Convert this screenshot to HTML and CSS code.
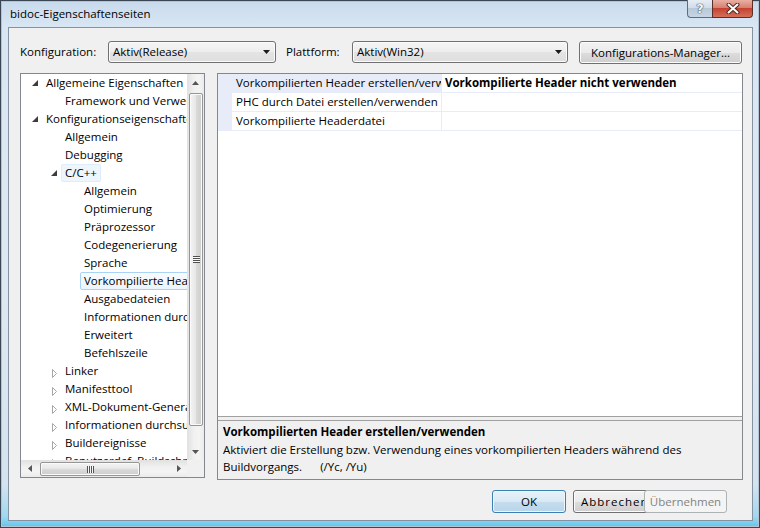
FILE: index.html
```html
<!DOCTYPE html>
<html lang="de">
<head>
<meta charset="utf-8">
<title>bidoc-Eigenschaftenseiten</title>
<link rel="stylesheet" href="styles.css">
</head>
<body>
<div class="window">
  <div class="titlebar">
    <span class="title">bidoc-Eigenschaftenseiten</span>
    <div class="caption">
      <span class="cap-btn help">?</span>
      <span class="cap-btn close"><svg width="14" height="11" viewBox="0 0 14 11"><path d="M2.5 1.5 L11.5 9.5 M11.5 1.5 L2.5 9.5" stroke="#4a2a25" stroke-width="4" stroke-linecap="round"/><path d="M2.5 1.5 L11.5 9.5 M11.5 1.5 L2.5 9.5" stroke="#ffffff" stroke-width="2" stroke-linecap="round"/></svg></span>
    </div>
  </div>
  <div class="client">
    <div class="toolbar">
      <span class="lbl lbl-konf">Konfiguration:</span>
      <div class="combo combo-konf"><span class="combo-text">Aktiv(Release)</span><svg class="drop" width="7" height="4" viewBox="0 0 7 4"><path d="M0 0H7L3.5 4Z"/></svg></div>
      <span class="lbl lbl-plat">Plattform:</span>
      <div class="combo combo-plat"><span class="combo-text">Aktiv(Win32)</span><svg class="drop" width="7" height="4" viewBox="0 0 7 4"><path d="M0 0H7L3.5 4Z"/></svg></div>
      <button class="btn btn-mgr">Konfigurations-Manager...</button>
    </div>
    <div class="main">
      <div class="tree">
        <div class="tree-top">
          <ul class="tree-list">
            <li class="ti l0"><span class="exp"><svg class="ex-open" width="6" height="6" viewBox="0 0 6 6"><path d="M6 0V6H0Z"/></svg></span>Allgemeine Eigenschaften</li>
            <li class="ti l1 leaf">Framework und Verweise</li>
            <li class="ti l0"><span class="exp"><svg class="ex-open" width="6" height="6" viewBox="0 0 6 6"><path d="M6 0V6H0Z"/></svg></span>Konfigurationseigenschaften</li>
            <li class="ti l1 leaf">Allgemein</li>
            <li class="ti l1 leaf">Debugging</li>
            <li class="ti l1"><span class="exp"><svg class="ex-open" width="6" height="6" viewBox="0 0 6 6"><path d="M6 0V6H0Z"/></svg></span><span class="hl hl-soft">C/C++</span></li>
            <li class="ti l2">Allgemein</li>
            <li class="ti l2">Optimierung</li>
            <li class="ti l2">Präprozessor</li>
            <li class="ti l2">Codegenerierung</li>
            <li class="ti l2">Sprache</li>
            <li class="ti l2"><span class="hl hl-sel">Vorkompilierte Header</span></li>
            <li class="ti l2">Ausgabedateien</li>
            <li class="ti l2">Informationen durchsuchen</li>
            <li class="ti l2">Erweitert</li>
            <li class="ti l2">Befehlszeile</li>
            <li class="ti l1"><span class="exp"><svg class="ex-closed" width="5" height="9" viewBox="0 0 5 9"><path d="M0.5 0.5L4.5 4.5L0.5 8.5Z"/></svg></span>Linker</li>
            <li class="ti l1"><span class="exp"><svg class="ex-closed" width="5" height="9" viewBox="0 0 5 9"><path d="M0.5 0.5L4.5 4.5L0.5 8.5Z"/></svg></span>Manifesttool</li>
            <li class="ti l1"><span class="exp"><svg class="ex-closed" width="5" height="9" viewBox="0 0 5 9"><path d="M0.5 0.5L4.5 4.5L0.5 8.5Z"/></svg></span>XML-Dokument-Generator</li>
            <li class="ti l1"><span class="exp"><svg class="ex-closed" width="5" height="9" viewBox="0 0 5 9"><path d="M0.5 0.5L4.5 4.5L0.5 8.5Z"/></svg></span>Informationen durchsuchen</li>
            <li class="ti l1"><span class="exp"><svg class="ex-closed" width="5" height="9" viewBox="0 0 5 9"><path d="M0.5 0.5L4.5 4.5L0.5 8.5Z"/></svg></span>Buildereignisse</li>
            <li class="ti l1"><span class="exp"><svg class="ex-closed" width="5" height="9" viewBox="0 0 5 9"><path d="M0.5 0.5L4.5 4.5L0.5 8.5Z"/></svg></span>Benutzerdef. Buildschritt</li>
          </ul>
          <div class="vscroll">
            <div class="sb-btn"><svg width="7" height="4" viewBox="0 0 7 4"><path d="M0 4L3.5 0L7 4Z"/></svg></div>
            <div class="v-track"><div class="v-thumb"><span class="grip-h"></span></div></div>
            <div class="sb-btn"><svg width="7" height="4" viewBox="0 0 7 4"><path d="M0 0H7L3.5 4Z"/></svg></div>
          </div>
        </div>
        <div class="tree-bottom">
          <div class="hscroll">
            <div class="sb-btn"><svg width="4" height="7" viewBox="0 0 4 7"><path d="M4 0V7L0 3.5Z"/></svg></div>
            <div class="h-track"><div class="h-thumb"><span class="grip-v"></span></div></div>
            <div class="sb-btn"><svg width="4" height="7" viewBox="0 0 4 7"><path d="M0 0V7L4 3.5Z"/></svg></div>
          </div>
          <div class="corner"></div>
        </div>
      </div>
      <div class="props">
        <div class="grid">
          <div class="row row-sel">
            <span class="gut"></span>
            <span class="name">Vorkompilierten Header erstellen/verwenden</span>
            <span class="value bold">Vorkompilierte Header nicht verwenden</span>
          </div>
          <div class="row">
            <span class="gut"></span>
            <span class="name">PHC durch Datei erstellen/verwenden</span>
            <span class="value"></span>
          </div>
          <div class="row">
            <span class="gut"></span>
            <span class="name">Vorkompilierte Headerdatei</span>
            <span class="value"></span>
          </div>
        </div>
        <div class="desc">
          <div class="desc-title">Vorkompilierten Header erstellen/verwenden</div>
          <div class="desc-text">Aktiviert die Erstellung bzw. Verwendung eines vorkompilierten Headers während des<br>Buildvorgangs.<span class="switch">(/Yc, /Yu)</span></div>
        </div>
      </div>
    </div>
    <div class="footer">
      <button class="btn btn-ok">OK</button>
      <button class="btn btn-cancel">Abbrechen</button>
      <button class="btn btn-apply" disabled>Übernehmen</button>
    </div>
  </div>
</div>
</body>
</html>
```
FILE: styles.css
```css
* { box-sizing: border-box; }
html, body { margin: 0; padding: 0; }
body {
  width: 760px;
  height: 528px;
  overflow: hidden;
  font-family: "Segoe UI", "Open Sans", "Noto Sans", sans-serif;
  font-size: 11.5px;
  color: #000;
  background: #2e3945;
}

.window {
  width: 760px;
  height: 528px;
  border: 1px solid #3a4654;
  box-shadow: inset 0 0 0 1px #b4c3d2;
  background: linear-gradient(to bottom, #c8daed 0, #d9e6f3 26px, #dfe8f1 55%, #d4e3ef 92%, #9fd8f0 98%, #5fc7ee 100%);
  display: flex;
  flex-direction: column;
}

/* title bar */
.titlebar {
  height: 26px;
  display: flex;
  align-items: flex-start;
  padding: 0 6px 0 9px;
}
.title {
  line-height: 25px;
  color: #000;
}
.caption {
  margin-left: auto;
  margin-top: -1px;
  display: flex;
}
.cap-btn {
  height: 18px;
  display: flex;
  align-items: center;
  justify-content: center;
  border: 1px solid #5e6d7e;
  border-top: none;
}
.help {
  width: 25px;
  border-right: none;
  border-radius: 0 0 0 4px;
  background: linear-gradient(to bottom, #e6edf5 0, #d3dde9 45%, #b9c8d9 50%, #c7d5e4 100%);
  color: #f4f7fa;
  font-weight: bold;
  font-size: 13px;
  font-family: "DejaVu Sans", sans-serif;
  text-shadow: 0 0 1px #3f4f60, 0 0 1px #3f4f60, 0 0 1px #3f4f60;
}
.close {
  width: 41px;
  border-color: #5a3029;
  border-radius: 0 0 4px 0;
  background: linear-gradient(to bottom, #e9b0a4 0, #d9806f 45%, #c4422f 50%, #d4705d 100%);
}

/* client */
.client {
  flex: 1;
  margin: 0 6px 6px 7px;
  border: 1px solid #8592a1;
  background: #f0f0f0;
  display: flex;
  flex-direction: column;
}

.toolbar {
  display: flex;
  align-items: flex-start;
  padding: 13px 0 0 11px;
  height: 36px;
}
.lbl {
  line-height: 22px;
  white-space: nowrap;
}
.lbl-konf { width: 88px; }
.lbl-plat { width: 66px; margin-left: 10px; }
.combo {
  height: 22px;
  border: 1px solid #707070;
  border-radius: 3px;
  background: linear-gradient(to bottom, #f5f5f5 0, #ededed 50%, #e4e4e4 51%, #dedede 100%);
  box-shadow: inset 0 0 0 1px #fbfbfb;
  display: flex;
  align-items: center;
  padding: 0 5px 0 4px;
}
.combo-konf { width: 168px; }
.combo-plat { width: 216px; }
.combo-text { flex: 1; line-height: 20px; }
.drop { fill: #1a1a1a; }

.btn {
  font-family: inherit;
  font-size: 11.5px;
  color: #000;
  height: 23px;
  padding: 0;
  border: 1px solid #707070;
  border-radius: 3px;
  background: linear-gradient(to bottom, #f2f2f2 0, #ebebeb 50%, #dddddd 51%, #cfcfcf 100%);
  box-shadow: inset 0 0 0 1px #fcfcfc;
  text-align: center;
  white-space: nowrap;
  overflow: hidden;
}
.btn-mgr { width: 163px; margin-left: 11px; }

/* main area */
.main {
  display: flex;
  align-items: flex-start;
  margin-top: 9px;
  padding-left: 11px;
}

.tree {
  width: 185px;
  height: 405px;
  border: 1px solid #828790;
  background: #fff;
  display: flex;
  flex-direction: column;
  margin-right: 12px;
}
.tree-top {
  display: flex;
  height: 386px;
}
.tree-list {
  flex: 1;
  list-style: none;
  margin: 0;
  padding: 0;
  overflow: hidden;
}
.ti {
  height: 18px;
  line-height: 18px;
  white-space: nowrap;
}
.l0 { padding-left: 11px; }
.l1 { padding-left: 30px; }
.l1.leaf { padding-left: 44px; }
.l2 { padding-left: 63px; }
.exp {
  display: inline-block;
  width: 14px;
  height: 18px;
  vertical-align: top;
}
.ex-open {
  display: block;
  margin-top: 6px;
  fill: #3c3c3c;
}
.ex-closed {
  display: block;
  margin: 7px 0 0 1px;
  fill: #fff;
  stroke: #a6a6a6;
  stroke-width: 1;
}
.hl {
  display: inline-block;
  height: 18px;
  line-height: 16px;
  padding: 0 3px;
  margin-left: -4px;
  border: 1px solid transparent;
  border-radius: 2px;
  vertical-align: top;
}
.hl-soft {
  border-color: #deedfa;
  background: #eef6fd;
}
.hl-sel {
  border-color: #a9d3f5;
  background: linear-gradient(to bottom, #f8fbff 0, #ebf4fd 100%);
}

.vscroll {
  width: 17px;
  display: flex;
  flex-direction: column;
  background: linear-gradient(to right, #e1e1e1 0, #f0f0f0 40%, #f4f4f4 70%, #ebebeb 100%);
}
.sb-btn {
  width: 17px;
  height: 17px;
  flex: none;
  display: flex;
  align-items: center;
  justify-content: center;
  fill: #555;
}
.v-track {
  flex: 1;
}
.v-thumb {
  margin: 2px 1px 0 2px;
  height: 333px;
  border: 1px solid #969696;
  border-radius: 2px;
  background: linear-gradient(to right, #f4f4f4 0, #e8e8e8 45%, #d9d9d9 55%, #cecece 100%);
  box-shadow: inset 0 0 0 1px #fafafa;
  display: flex;
  align-items: center;
  justify-content: center;
}
.grip-h {
  width: 7px;
  height: 7px;
  background: repeating-linear-gradient(to bottom, #525252 0, #525252 1px, #f8f8f8 1px, #f8f8f8 2px);
}

.tree-bottom {
  display: flex;
  height: 17px;
}
.hscroll {
  flex: 1;
  display: flex;
  background: linear-gradient(to bottom, #e1e1e1 0, #f0f0f0 40%, #f4f4f4 70%, #ebebeb 100%);
}
.h-track { flex: 1; }
.h-thumb {
  margin: 2px 0 1px 2px;
  width: 100px;
  height: 14px;
  border: 1px solid #969696;
  border-radius: 2px;
  background: linear-gradient(to bottom, #f4f4f4 0, #e8e8e8 45%, #d9d9d9 55%, #cecece 100%);
  box-shadow: inset 0 0 0 1px #fafafa;
  display: flex;
  align-items: center;
  justify-content: center;
}
.grip-v {
  width: 7px;
  height: 7px;
  background: repeating-linear-gradient(to right, #525252 0, #525252 1px, #f8f8f8 1px, #f8f8f8 2px);
}
.corner {
  width: 17px;
  background: #f0f0f0;
}

/* property grid */
.props {
  width: 526px;
  height: 407px;
  border: 1px solid #828790;
  background: #f0f0f0;
  display: flex;
  flex-direction: column;
}
.grid {
  height: 343px;
  background: #fff;
  border-bottom: 1px solid #a0a0a0;
}
.row {
  display: flex;
  height: 19px;
  border-bottom: 1px solid #e8ebf8;
}
.gut {
  width: 14px;
  background: #e8ebf8;
  flex: none;
}
.name {
  width: 210px;
  flex: none;
  padding-left: 4px;
  line-height: 18px;
  white-space: nowrap;
  overflow: hidden;
  border-right: 1px solid #e8ebf8;
}
.row-sel .name { background: #e8ebf8; }
.value {
  flex: 1;
  padding-left: 3px;
  line-height: 18px;
  white-space: nowrap;
  overflow: hidden;
}
.bold { font-weight: bold; }

.desc {
  flex: 1;
  margin-top: 3px;
  border-top: 1px solid #a0a0a0;
  padding: 1px 5px 0;
}
.desc-title {
  font-weight: bold;
  line-height: 19px;
}
.desc-text {
  line-height: 17px;
}
.switch { margin-left: 18px; }

/* footer buttons */
.footer {
  display: flex;
  justify-content: flex-end;
  margin-top: 10px;
  padding-right: 25px;
}
.btn-ok {
  width: 74px;
  border-color: #3c7fb1;
  background: linear-gradient(to bottom, #e8f2f9 0, #d9e9f4 50%, #c5dded 51%, #b8d5ea 100%);
  box-shadow: inset 0 0 0 1px #eef7fd;
}
.btn-cancel {
  width: 78px;
  margin-left: 7px;
  text-align: left;
  padding-left: 7px;
  letter-spacing: 1px;
}
.btn-apply {
  width: 83px;
  margin-left: -7px;
  position: relative;
  border-color: #adb2b5;
  background: #f4f4f4;
  box-shadow: none;
  color: #838383;
}
```
